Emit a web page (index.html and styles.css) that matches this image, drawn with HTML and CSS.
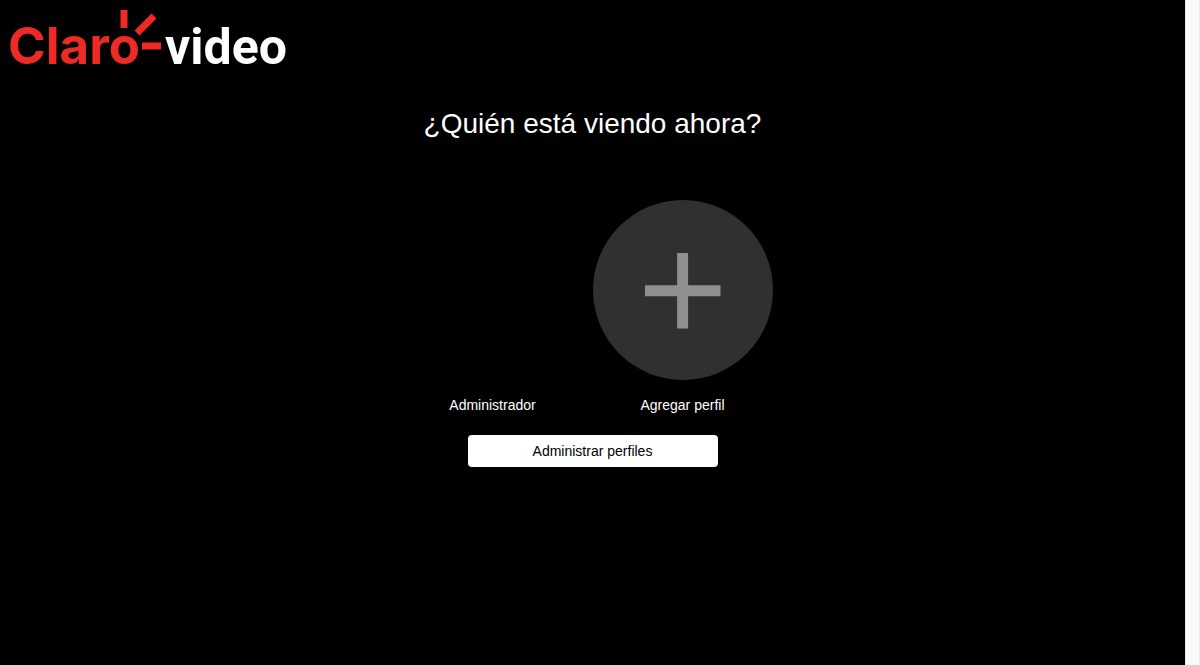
FILE: index.html
```html
<!DOCTYPE html>
<html lang="es">
<head>
<meta charset="utf-8">
<title>Claro video</title>
<link rel="stylesheet" href="styles.css">
</head>
<body>
<div class="page">
  <header class="header">
    <svg class="logo" viewBox="0 0 280 60" role="img" aria-label="Claro video">
      <text class="logo-claro" x="-2" y="54">Claro</text>
      <g class="logo-rays">
        <path d="M114 0v18M127 23L144 6M132 36h19"/>
      </g>
      <text class="logo-video" x="155" y="54">video</text>
    </svg>
  </header>
  <main class="profiles">
    <h1 class="title">¿Quién está viendo ahora?</h1>
    <ul class="profile-list">
      <li><button class="profile" type="button">
        <span class="avatar"></span>
        <span class="name">Administrador</span>
      </button></li>
      <li><button class="profile" type="button">
        <svg class="avatar" viewBox="0 0 180 180" aria-hidden="true">
          <circle cx="90" cy="90" r="90" fill="#303030"/>
          <path d="M52 90.700h75.500M89.600 53v75.500" stroke="#8f8f8f" stroke-width="11"/>
        </svg>
        <span class="name">Agregar perfil</span>
      </button></li>
    </ul>
    <button class="manage" type="button">Administrar perfiles</button>
  </main>
</div>
<div class="scroll-track"></div>
</body>
</html>
```
FILE: styles.css
```css
* {
  box-sizing: border-box;
}

body {
  margin: 0;
  min-height: 100vh;
  display: flex;
  background: #000;
  color: #fff;
  font-family: "Liberation Sans", Arial, sans-serif;
}

.page {
  flex: 1;
}

.scroll-track {
  width: 15px;
  background: #fafafa;
  border: solid #e8e8e8;
  border-width: 0 1px;
}

.header {
  padding: 10px;
}

.logo {
  display: block;
  width: 280px;
  height: 60px;
  overflow: visible;
}

.logo-claro {
  fill: #ee2a24;
  font: 700 51px Inter, sans-serif;
}

.logo-video {
  fill: #fff;
  font: 700 50px Roboto, sans-serif;
}

.logo-rays {
  fill: none;
  stroke: #ee2a24;
  stroke-width: 7px;
}

.profiles {
  display: flex;
  flex-direction: column;
  align-items: center;
  padding-top: 27px;
}

.title {
  margin: 0;
  font-size: 28px;
  font-weight: 400;
  line-height: 33px;
}

.profile-list {
  display: flex;
  margin: 60px 0 0;
  padding: 0;
  list-style: none;
}

.profile {
  display: block;
  margin: 0 10px 0 0;
  padding: 0;
  border: 0;
  background: none;
  color: inherit;
  font: inherit;
}

.avatar {
  display: block;
  width: 180px;
  height: 180px;
}

.name {
  display: block;
  margin-top: 17px;
  font-size: 14px;
  line-height: 16px;
}

.manage {
  width: 250px;
  height: 32px;
  margin-top: 22px;
  border: 0;
  border-radius: 4px;
  background: #fff;
  color: #000;
  font: 14px "Liberation Sans", Arial, sans-serif;
}
```
